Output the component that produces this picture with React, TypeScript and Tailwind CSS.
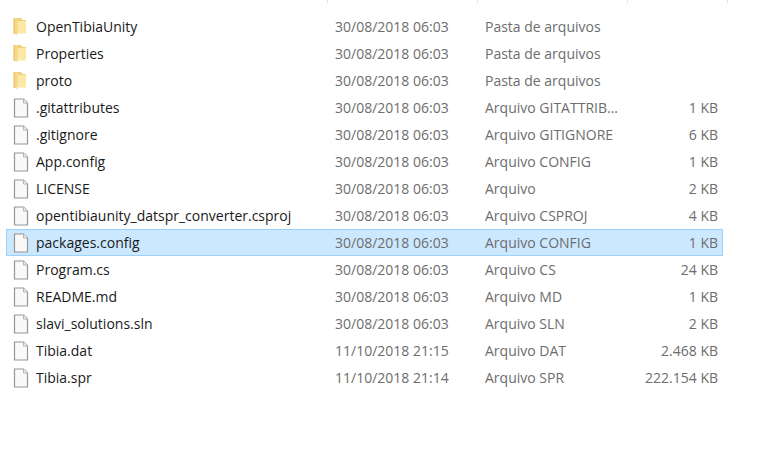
import React from "react";

type Row = { name: string; date: string; type: string; size?: string; folder?: boolean; selected?: boolean };

const rows: Row[] = [
  { name: "OpenTibiaUnity", date: "30/08/2018 06:03", type: "Pasta de arquivos", folder: true },
  { name: "Properties", date: "30/08/2018 06:03", type: "Pasta de arquivos", folder: true },
  { name: "proto", date: "30/08/2018 06:03", type: "Pasta de arquivos", folder: true },
  { name: ".gitattributes", date: "30/08/2018 06:03", type: "Arquivo GITATTRIB...", size: "1 KB" },
  { name: ".gitignore", date: "30/08/2018 06:03", type: "Arquivo GITIGNORE", size: "6 KB" },
  { name: "App.config", date: "30/08/2018 06:03", type: "Arquivo CONFIG", size: "1 KB" },
  { name: "LICENSE", date: "30/08/2018 06:03", type: "Arquivo", size: "2 KB" },
  { name: "opentibiaunity_datspr_converter.csproj", date: "30/08/2018 06:03", type: "Arquivo CSPROJ", size: "4 KB" },
  { name: "packages.config", date: "30/08/2018 06:03", type: "Arquivo CONFIG", size: "1 KB", selected: true },
  { name: "Program.cs", date: "30/08/2018 06:03", type: "Arquivo CS", size: "24 KB" },
  { name: "README.md", date: "30/08/2018 06:03", type: "Arquivo MD", size: "1 KB" },
  { name: "slavi_solutions.sln", date: "30/08/2018 06:03", type: "Arquivo SLN", size: "2 KB" },
  { name: "Tibia.dat", date: "11/10/2018 21:15", type: "Arquivo DAT", size: "2.468 KB" },
  { name: "Tibia.spr", date: "11/10/2018 21:14", type: "Arquivo SPR", size: "222.154 KB" },
];

function FolderIcon() {
  return (
    <svg width="16" height="18" viewBox="0 0 16 18">
      {/* back of the folder with its tab */}
      <path d="M1 0h7l1.5 2H13v13H1z" fill="#efd07c" />
      {/* front flap */}
      <path d="M4.5 3H13v12.5H4.5z" fill="#fbe7a6" />
      <path d="M1.5 0.5h3V17l-3-1z" fill="#f5d988" />
      <path d="M1 0v16" stroke="#e3bb58" strokeWidth="1" />
    </svg>
  );
}

function FileIcon() {
  return (
    <svg width="16" height="20" viewBox="0 0 16 20">
      <path d="M1.5 1h9l4 4v14h-13z" fill="#f9f9f9" stroke="#969696" strokeWidth="1.2" />
      <path d="M10.5 1v4h4" fill="#ececec" stroke="#b4b4b4" />
    </svg>
  );
}

export default function App() {
  return (
    <div className="w-[761px] h-[452px] bg-white overflow-hidden text-[14px] font-['Open_Sans','Noto_Sans',sans-serif]">
      <div className="flex h-[3px] pl-[327px]">
        <div className="w-[150px] border-l border-[#e5e5e5]" />
        <div className="w-[150px] border-l border-[#e5e5e5]" />
        <div className="w-[100px] border-l border-[#e5e5e5]" />
        <div className="w-[1px] border-l border-[#e5e5e5]" />
      </div>
      <div className="pl-[6px] pt-[10px]">
        {rows.map((r) => (
          <div
            key={r.name}
            className={
              r.selected
                ? "flex items-center w-[717px] h-[27px] border border-[#99d1ff] bg-[#cce8ff]"
                : "flex items-center w-[717px] h-[27px] border border-transparent"
            }
          >
            <div className="w-[29px] pl-[6px] flex items-center">{r.folder ? <FolderIcon /> : <FileIcon />}</div>
            <div className="w-[299px] text-[#1a1a1a] whitespace-nowrap">{r.name}</div>
            <div className="w-[150px] text-[#6d6d6d] whitespace-nowrap">{r.date}</div>
            <div className="w-[135px] text-[#6d6d6d] whitespace-nowrap">{r.type}</div>
            <div className="w-[98px] text-right text-[#6d6d6d] whitespace-nowrap">{r.size}</div>
          </div>
        ))}
      </div>
    </div>
  );
}
